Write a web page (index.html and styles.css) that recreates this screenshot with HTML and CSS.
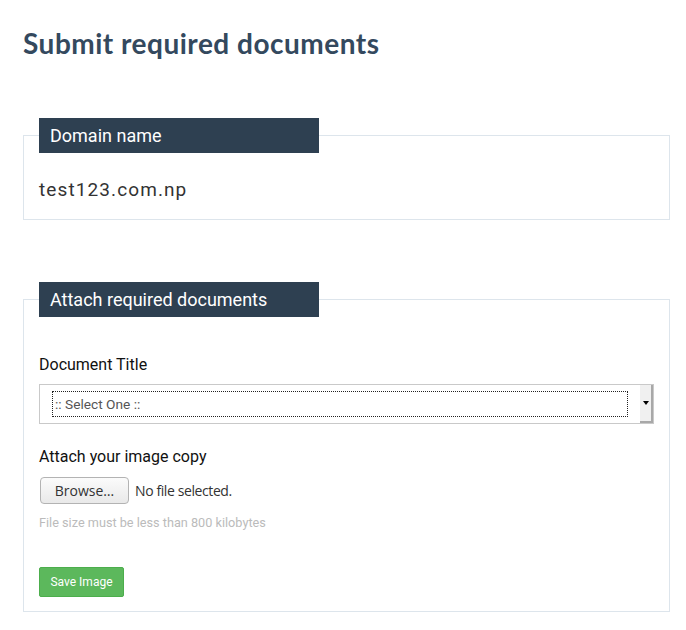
FILE: index.html
```html
<!DOCTYPE html>
<html>
<head>
<meta charset="utf-8">
<link rel="stylesheet" href="styles.css">
</head>
<body>
<div class="page">
  <h1 class="title">Submit required documents</h1>

  <fieldset class="box box-domain">
    <legend class="box-legend">Domain name</legend>
    <div class="domain">test123.com.np</div>
  </fieldset>

  <fieldset class="box box-attach">
    <legend class="box-legend">Attach required documents</legend>
    <div class="label label-first">Document Title</div>
    <div class="select">
      <div class="select-inner"><span class="select-text">:: Select One ::</span></div>
      <div class="select-btn"><span class="arrow"></span></div>
    </div>
    <div class="label label-second">Attach your image copy</div>
    <div class="file-row">
      <button class="browse" type="button">Browse…</button>
      <span class="file-status">No file selected.</span>
    </div>
    <div class="help">File size must be less than 800 kilobytes</div>
    <button class="save" type="button">Save Image</button>
  </fieldset>
</div>
</body>
</html>
```

FILE: styles.css
```css
html, body {
  margin: 0;
  padding: 0;
  background: #ffffff;
}

.page {
  padding: 0 16px 0 23px;
  font-family: Roboto, "Liberation Sans", sans-serif;
}

.title {
  margin: 27px 0 0;
  font-family: Lato, "DejaVu Sans", sans-serif;
  font-weight: 700;
  font-size: 28px;
  line-height: 32px;
  letter-spacing: 0.5px;
  color: #34495e;
}

.box {
  margin: 59px 0 0;
  padding: 0 15px;
  border: 1px solid #dde5ec;
  min-width: 0;
}

.box-attach {
  margin-top: 62px;
  padding-bottom: 14px;
}

.box-legend {
  width: 280px;
  box-sizing: border-box;
  height: 35px;
  padding: 0 11px;
  margin: 0;
  background: #2e4051;
  color: #ffffff;
  font-size: 18px;
  line-height: 35px;
}

.domain {
  margin-top: 24px;
  margin-bottom: 16px;
  font-size: 19px;
  line-height: 26px;
  letter-spacing: 1.1px;
  color: #333333;
}

.label {
  font-size: 16px;
  line-height: 22px;
  color: #111111;
}

.label-first {
  margin-top: 37px;
}

.label-second {
  margin-top: 22px;
}

.select {
  margin-top: 8px;
  height: 40px;
  box-sizing: border-box;
  border: 1px solid #c9c9c9;
  display: flex;
  align-items: stretch;
  background: #ffffff;
}

.select-inner {
  flex: 1;
  display: flex;
  align-items: center;
  padding: 6px 12px 6px 12px;
}

.select-text {
  flex: 1;
  align-self: stretch;
  display: flex;
  align-items: center;
  border: 1px dotted #222222;
  padding-left: 2px;
  font-size: 13.7px;
  color: #555555;
}

.select-btn {
  width: 11px;
  background: #f0f0f0;
  border-right: 2px solid #a8a8a8;
  border-bottom: 2px solid #a8a8a8;
  display: flex;
  align-items: center;
  justify-content: center;
}

.arrow {
  width: 0;
  height: 0;
  border-left: 3px solid transparent;
  border-right: 3px solid transparent;
  border-top: 4px solid #000000;
}

.file-row {
  margin-top: 9px;
  display: flex;
  align-items: center;
  gap: 6px;
}

.browse {
  width: 89px;
  height: 27px;
  margin-left: 1px;
  padding: 0;
  border: 1px solid #b3b3b3;
  border-radius: 4px;
  background: linear-gradient(#fbfbfb, #e9e9e9);
  font-family: "Open Sans", "DejaVu Sans", sans-serif;
  font-size: 14px;
  color: #333333;
}

.file-status {
  font-family: "Open Sans", "DejaVu Sans", sans-serif;
  font-size: 14px;
  color: #333333;
  letter-spacing: -0.4px;
}

.help {
  margin-top: 10px;
  font-size: 12.7px;
  line-height: 18px;
  color: #bbbbbb;
}

.save {
  display: block;
  margin-top: 35px;
  width: 85px;
  height: 30px;
  padding: 0;
  border: 1px solid #4cae4c;
  border-radius: 2px;
  background: #5cb85c;
  color: #ffffff;
  font-family: Roboto, "Liberation Sans", sans-serif;
  font-size: 12px;
}
```
